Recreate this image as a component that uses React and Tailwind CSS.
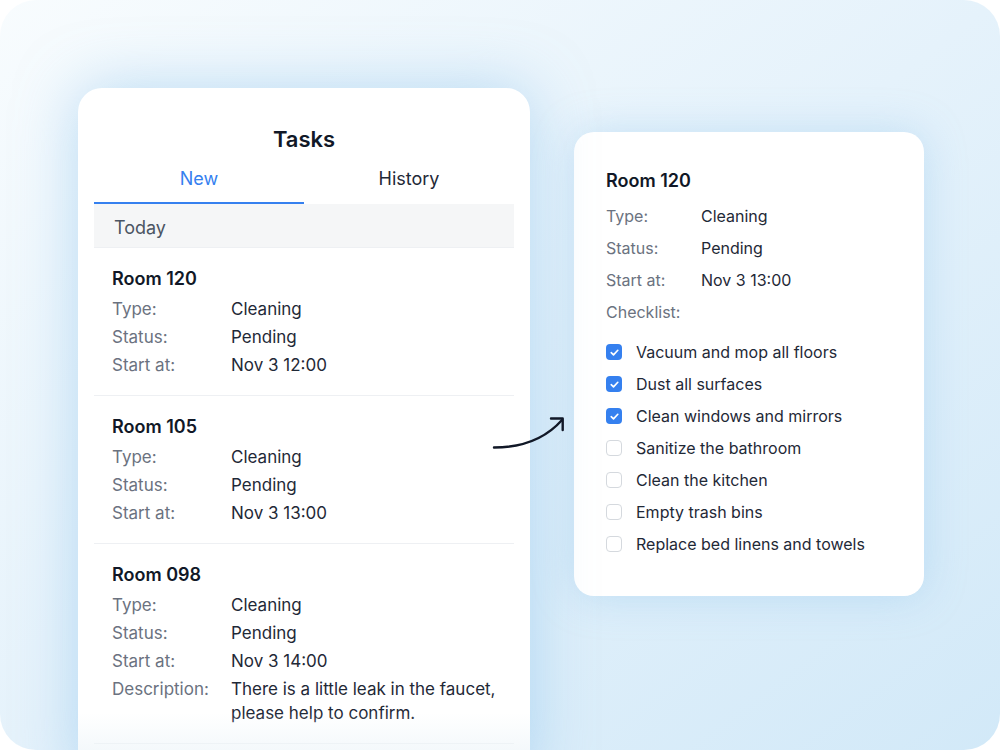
import React from 'react';

const tasks = [
  { room: 'Room 120', type: 'Cleaning', status: 'Pending', start: 'Nov 3 12:00' },
  { room: 'Room 105', type: 'Cleaning', status: 'Pending', start: 'Nov 3 13:00' },
  {
    room: 'Room 098',
    type: 'Cleaning',
    status: 'Pending',
    start: 'Nov 3 14:00',
    description: 'There is a little leak in the faucet, please help to confirm.'
  }
];

const checklist = [
  { label: 'Vacuum and mop all floors', done: true },
  { label: 'Dust all surfaces', done: true },
  { label: 'Clean windows and mirrors', done: true },
  { label: 'Sanitize the bathroom', done: false },
  { label: 'Clean the kitchen', done: false },
  { label: 'Empty trash bins', done: false },
  { label: 'Replace bed linens and towels', done: false }
];

const Row = ({ label, value, w = 'w-[119px]' }) => (
  <div className="flex leading-6">
    <div className={`${w} shrink-0 text-[#6b7280]`}>{label}</div>
    <div className="text-[#1f2937]">{value}</div>
  </div>
);

const TaskItem = ({ t }) => (
  <div className="border-b border-[#eef0f3] pl-[18px] pr-4 pt-[19px] pb-[18px]">
    <div className="mb-[6px] text-[18px] leading-6 font-semibold text-[#111827]">{t.room}</div>
    <div className="space-y-1">
      <Row label="Type:" value={t.type} />
      <Row label="Status:" value={t.status} />
      <Row label="Start at:" value={t.start} />
      {t.description && <Row label="Description:" value={t.description} />}
    </div>
  </div>
);

const Checkbox = ({ checked }) =>
  checked ? (
    <span className="flex h-4 w-4 items-center justify-center rounded-[4px] bg-[#3580ef]">
      <svg width="11" height="11" viewBox="0 0 10 10" fill="none">
        <path d="M2 5.2 4.1 7.2 8 3" stroke="white" strokeWidth="1.5" strokeLinecap="round" strokeLinejoin="round" />
      </svg>
    </span>
  ) : (
    <span className="h-4 w-4 rounded-[4px] border border-[#d5d9de] bg-white" />
  );

export default function App() {
  return (
    <div className="bg-white">
      <div
        className="relative flex h-[750px] w-[1000px] items-start overflow-hidden rounded-[36px] bg-linear-to-br from-[#f8fcfe] via-[#e5f2fb] to-[#d2e9f8] pl-[78px] pt-[88px] text-[17px]"
        style={{ fontFamily: 'Inter, "Noto Sans", sans-serif' }}
      >
        {/* left card */}
        <div className="relative w-[452px] shrink-0 rounded-[24px] bg-white px-4 pt-[37px] pb-10 shadow-[0_0_60px_rgba(130,190,235,0.5)]">
          <div className="text-center text-[22px] leading-7 font-semibold text-[#111827]">Tasks</div>
          <div className="flex text-[18px]">
            <div className="flex h-[51px] flex-1 items-center justify-center border-b-2 border-[#3580ef] pt-[2px] text-[#3580ef]">
              New
            </div>
            <div className="flex h-[51px] flex-1 items-center justify-center border-b-2 border-transparent pt-[2px] text-[#1f2937]">
              History
            </div>
          </div>
          <div className="flex h-[44px] items-center border-b border-[#eef0f3] bg-[#f5f6f7] pl-5 pt-[3px] text-[18px] text-[#4b5563]">
            Today
          </div>
          {tasks.map((t) => (
            <TaskItem key={t.room} t={t} />
          ))}
          <div className="pointer-events-none absolute inset-x-0 top-[625px] h-[40px] bg-linear-to-b from-white/0 to-[#eef5f9]/70" />
        </div>

        {/* right card */}
        <div className="ml-[44px] mt-[44px] w-[350px] shrink-0 rounded-[20px] bg-white pl-8 pr-6 pt-[37px] pb-[40px] text-[16px] shadow-[0_0_40px_rgba(130,190,235,0.35)]">
          <div className="text-[18px] leading-6 font-semibold text-[#111827]">Room 120</div>
          <div className="mt-[11px] space-y-2">
            <Row label="Type:" value="Cleaning" w="w-[95px]" />
            <Row label="Status:" value="Pending" w="w-[95px]" />
            <Row label="Start at:" value="Nov 3 13:00" w="w-[95px]" />
            <div className="leading-6 text-[#6b7280]">Checklist:</div>
          </div>
          <div className="mt-4 space-y-2">
            {checklist.map((c) => (
              <div key={c.label} className="flex items-center gap-[14px] leading-6 text-[#1f2937]">
                <Checkbox checked={c.done} />
                <span>{c.label}</span>
              </div>
            ))}
          </div>
        </div>

        {/* arrow */}
        <svg className="absolute left-[488px] top-[410px]" width="84" height="46" viewBox="488 410 84 46" fill="none">
          <path d="M494 447.5C525 447.5 546 438 562 420" stroke="#111827" strokeWidth="2.4" strokeLinecap="round" />
          <path d="M551 418.5H562.7V430" stroke="#111827" strokeWidth="2.4" strokeLinecap="round" strokeLinejoin="round" />
        </svg>
      </div>
    </div>
  );
}
